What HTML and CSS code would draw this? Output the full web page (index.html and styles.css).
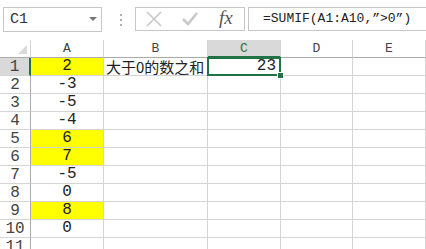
FILE: index.html
```html
<!DOCTYPE html>
<html lang="zh">
<head>
    <meta charset="UTF-8">
    <meta name="viewport" content="width=device-width, initial-scale=1.0">
    <title>SUMIF</title>
    <link rel="stylesheet" href="styles.css">
</head>
<body>
    <div class="app">
        <div class="formula-bar">
            <div class="name-box">
                <span class="name">C1</span>
                <span class="arrow"></span>
            </div>
            <div class="grip">
                <span></span><span></span><span></span>
            </div>
            <div class="fx-box">
                <svg class="icon" width="18" height="18" viewBox="0 0 18 18">
                    <path d="M2 2 L16 16 M16 2 L2 16" stroke="#c8c8c8" stroke-width="1.6" fill="none"/>
                </svg>
                <svg class="icon" width="20" height="18" viewBox="0 0 20 18">
                    <path d="M3 9 L8 14 L17 3" stroke="#c8c8c8" stroke-width="2.6" fill="none"/>
                </svg>
                <span class="fx">fx</span>
            </div>
            <div class="formula">=SUMIF(A1:A10,”&gt;0”)</div>
        </div>

        <div class="sheet">
            <div class="corner"></div>
            <div class="col-head">A</div>
            <div class="col-head">B</div>
            <div class="col-head active">C</div>
            <div class="col-head">D</div>
            <div class="col-head">E</div>

            <div class="row-head active">1</div>
            <div class="cell num yellow">2</div>
            <div class="cell text">大于0的数之和</div>
            <div class="cell right selected">23</div>
            <div class="cell"></div>
            <div class="cell"></div>

            <div class="row-head">2</div>
            <div class="cell num">-3</div>
            <div class="cell"></div><div class="cell"></div><div class="cell"></div><div class="cell"></div>

            <div class="row-head">3</div>
            <div class="cell num">-5</div>
            <div class="cell"></div><div class="cell"></div><div class="cell"></div><div class="cell"></div>

            <div class="row-head">4</div>
            <div class="cell num">-4</div>
            <div class="cell"></div><div class="cell"></div><div class="cell"></div><div class="cell"></div>

            <div class="row-head">5</div>
            <div class="cell num yellow">6</div>
            <div class="cell"></div><div class="cell"></div><div class="cell"></div><div class="cell"></div>

            <div class="row-head">6</div>
            <div class="cell num yellow">7</div>
            <div class="cell"></div><div class="cell"></div><div class="cell"></div><div class="cell"></div>

            <div class="row-head">7</div>
            <div class="cell num">-5</div>
            <div class="cell"></div><div class="cell"></div><div class="cell"></div><div class="cell"></div>

            <div class="row-head">8</div>
            <div class="cell num">0</div>
            <div class="cell"></div><div class="cell"></div><div class="cell"></div><div class="cell"></div>

            <div class="row-head">9</div>
            <div class="cell num yellow">8</div>
            <div class="cell"></div><div class="cell"></div><div class="cell"></div><div class="cell"></div>

            <div class="row-head">10</div>
            <div class="cell num">0</div>
            <div class="cell"></div><div class="cell"></div><div class="cell"></div><div class="cell"></div>

            <div class="row-head">11</div>
            <div class="cell"></div>
            <div class="cell"></div><div class="cell"></div><div class="cell"></div><div class="cell"></div>
        </div>
    </div>
</body>
</html>
```

FILE: styles.css
```css
body {
    margin: 0;
    background: #fff;
    font-family: "Liberation Mono", "Noto Sans CJK SC", monospace;
    color: #222;
}
.app {
    width: 426px;
    height: 249px;
    overflow: hidden;
}
.formula-bar {
    display: flex;
    height: 40px;
    box-sizing: border-box;
    padding: 7px 0 0 3px;
}
.name-box {
    width: 99px;
    height: 25px;
    box-sizing: border-box;
    border: 1px solid #c6c6c6;
    display: flex;
    align-items: center;
    justify-content: space-between;
    padding: 0 4px 0 6px;
}
.name {
    font-size: 15px;
    color: #333;
}
.arrow {
    width: 0;
    height: 0;
    border-left: 4px solid transparent;
    border-right: 4px solid transparent;
    border-top: 4px solid #777;
    margin-top: -2px;
}
.grip {
    width: 33px;
    display: flex;
    flex-direction: column;
    align-items: center;
    justify-content: center;
    gap: 3px;
    height: 25px;
    padding-left: 4px;
    box-sizing: border-box;
}
.grip span {
    width: 2px;
    height: 2px;
    background: #b0b0b0;
}
.fx-box {
    width: 110px;
    height: 24px;
    box-sizing: border-box;
    border: 1px solid #c6c6c6;
    display: flex;
    align-items: center;
    padding-left: 9px;
}
.icon {
    margin-right: 17px;
}
.icon + .icon {
    margin-right: 19px;
}
.fx {
    font-family: "Liberation Serif", serif;
    font-style: italic;
    font-size: 19px;
    color: #555;
    margin-top: -2px;
}
.formula {
    flex: 1;
    height: 24px;
    box-sizing: border-box;
    margin-left: 3px;
    border: 1px solid #c6c6c6;
    border-right: none;
    font-size: 13px;
    line-height: 22px;
    padding-left: 14px;
    color: #222;
    white-space: nowrap;
}
.sheet {
    display: grid;
    grid-template-columns: 31px 73px 104px 73px 72px 1fr;
    grid-auto-rows: 18px;
}
.sheet > div {
    box-sizing: border-box;
}
.corner {
    border-right: 1px solid #d4d4d4;
    border-bottom: 1px solid #ababab;
    position: relative;
}
.corner::after {
    content: "";
    position: absolute;
    right: 3px;
    bottom: 3px;
    border-left: 9px solid transparent;
    border-bottom: 9px solid #dadada;
}
.col-head {
    border-right: 1px solid #d4d4d4;
    border-bottom: 1px solid #ababab;
    text-align: center;
    font-size: 13px;
    line-height: 18px;
    color: #444;
}
.col-head.active {
    background: #d9d9d9;
    border-bottom: 2px solid #217346;
    color: #217346;
}
.row-head {
    border-right: 1px solid #ababab;
    border-bottom: 1px solid #d4d4d4;
    text-align: center;
    font-size: 16px;
    line-height: 18px;
    color: #444;
}
.row-head.active {
    background: #d9d9d9;
    border-right: 2px solid #217346;
}
.cell {
    border-right: 1px solid #d4d4d4;
    border-bottom: 1px solid #d4d4d4;
    font-size: 16px;
    line-height: 17px;
    white-space: nowrap;
}
.num {
    text-align: center;
}
.right {
    text-align: right;
    padding-right: 3px;
}
.text {
    padding-left: 2px;
    font-family: "Noto Sans CJK SC", sans-serif;
    font-size: 15px;
    line-height: 17px;
}
.yellow {
    background: #ffff00;
}
.selected {
    position: relative;
    border: 2px solid #217346;
    margin: -1px 0 0 -1px;
    line-height: 15px;
}
.selected::after {
    content: "";
    position: absolute;
    right: -5px;
    bottom: -5px;
    width: 5px;
    height: 5px;
    background: #217346;
    border: 1px solid #fff;
}
```
